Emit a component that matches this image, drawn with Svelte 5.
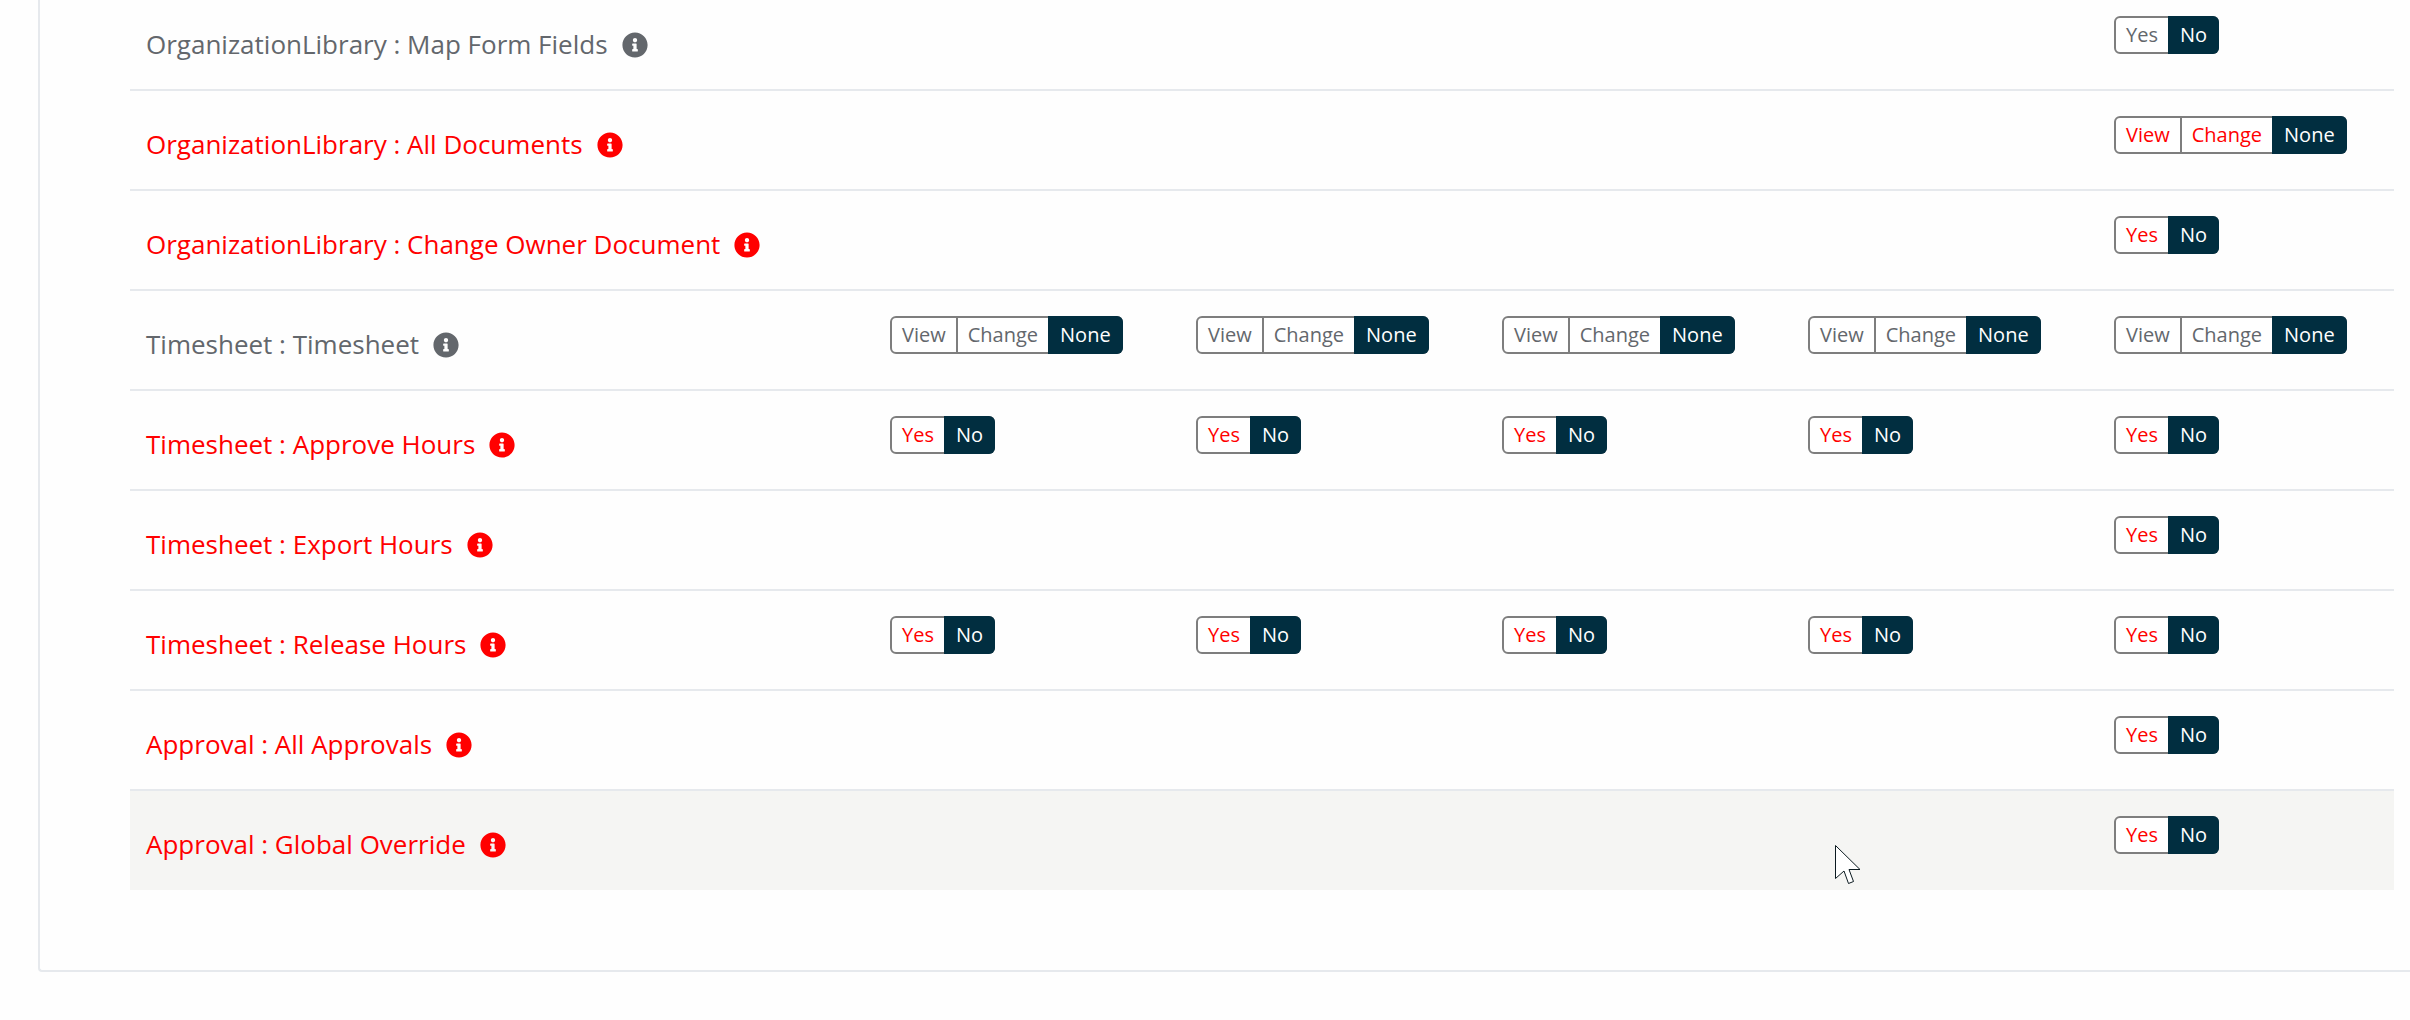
<script>
  const rows = [
    { label: 'OrganizationLibrary : Map Form Fields', red: false, kind: 'yn', all: false },
    { label: 'OrganizationLibrary : All Documents', red: true, kind: 'vcn', all: false },
    { label: 'OrganizationLibrary : Change Owner Document', red: true, kind: 'yn', all: false },
    { label: 'Timesheet : Timesheet', red: false, kind: 'vcn', all: true },
    { label: 'Timesheet : Approve Hours', red: true, kind: 'yn', all: true },
    { label: 'Timesheet : Export Hours', red: true, kind: 'yn', all: false },
    { label: 'Timesheet : Release Hours', red: true, kind: 'yn', all: true },
    { label: 'Approval : All Approvals', red: true, kind: 'yn', all: false },
    { label: 'Approval : Global Override', red: true, kind: 'yn', all: false, hover: true }
  ];
  const cols = [0, 1, 2, 3, 4];
  const options = { yn: ['Yes', 'No'], vcn: ['View', 'Change', 'None'] };
</script>

<div class="page">
  <div class="card">
    <div class="table">
      {#each rows as row}
        <div class="row" class:red={row.red} class:hover={row.hover}>
          <div class="label">
            <span>{row.label}</span>
            <svg class="info" viewBox="0 0 512 512" aria-hidden="true">
              <path fill="currentColor" d="M256 8C119.043 8 8 119.083 8 256c0 136.997 111.043 248 248 248s248-111.003 248-248C504 119.083 392.957 8 256 8zm0 110c23.196 0 42 18.804 42 42s-18.804 42-42 42-42-18.804-42-42 18.804-42 42-42zm56 254c0 6.627-5.373 12-12 12h-88c-6.627 0-12-5.373-12-12v-24c0-6.627 5.373-12 12-12h12v-64h-12c-6.627 0-12-5.373-12-12v-24c0-6.627 5.373-12 12-12h64c6.627 0 12 5.373 12 12v100h12c6.627 0 12 5.373 12 12v24z" />
            </svg>
          </div>
          {#each cols as c}
            <div class="cell">
              {#if row.all || c === 4}
                <div class="toggle">
                  {#each options[row.kind] as opt, i}
                    <div class="opt" class:on={i === options[row.kind].length - 1}>{opt}</div>
                  {/each}
                </div>
              {/if}
            </div>
          {/each}
        </div>
      {/each}
    </div>
  </div>
  <svg class="cursor" width="26" height="40" viewBox="0 0 26 40" aria-hidden="true">
    <path d="M0.5 0.5 L0.5 33.5 L9 26 L13.5 38.5 L18.5 36.5 L14 24.5 L25 24.5 Z" fill="#fff" stroke="#0b1a20" stroke-width="1" stroke-linejoin="round" />
  </svg>
</div>

<style>
  :global(body) {
    margin: 0;
    background: #fefefe;
    overflow: hidden;
  }
  .page {
    position: relative;
    width: 2410px;
    height: 1020px;
    overflow: hidden;
    font-family: "Open Sans", "Noto Sans", sans-serif;
  }
  .card {
    box-sizing: border-box;
    width: 2500px;
    margin: -30px 0 0 38px;
    padding: 19px 0 80px 90px;
    background: #fefefe;
    border: 2px solid #e6e9ed;
    border-right: 0;
    border-radius: 4px;
  }
  .table {
    width: 2264px;
  }
  .row {
    display: grid;
    grid-template-columns: 760px repeat(4, 306px) 1fr;
    height: 100px;
    box-sizing: border-box;
    border-bottom: 2px solid #e6e9ed;
    color: #63676c;
  }
  .row.red {
    color: #ff0000;
  }
  .row:last-child {
    border-bottom: 0;
    height: 99px;
  }
  .row.hover {
    background: #f5f5f3;
  }
  .label {
    display: flex;
    align-items: center;
    gap: 14px;
    height: 38px;
    padding: 35px 0 0 16px;
    font-size: 26px;
    line-height: 38px;
  }
  .label span {
    margin-bottom: 2px;
  }
  .info {
    width: 26px;
    height: 26px;
    flex: none;
  }
  .cell {
    padding-top: 25px;
  }
  .toggle {
    display: inline-flex;
    height: 38px;
    box-sizing: border-box;
    border: 2px solid #7e7e7e;
    border-radius: 6px;
    background: #fff;
    font-size: 20px;
    line-height: 33px;
  }
  .opt {
    padding: 0 10px;
  }
  .opt + .opt {
    border-left: 2px solid #7e7e7e;
  }
  .opt.on {
    margin: -2px -2px -2px 0;
    padding: 2px 12px;
    border-left: 0;
    background: #012e40;
    color: #fff;
    border-radius: 0 6px 6px 0;
  }
  .cursor {
    position: absolute;
    left: 1835px;
    top: 845px;
  }
</style>
